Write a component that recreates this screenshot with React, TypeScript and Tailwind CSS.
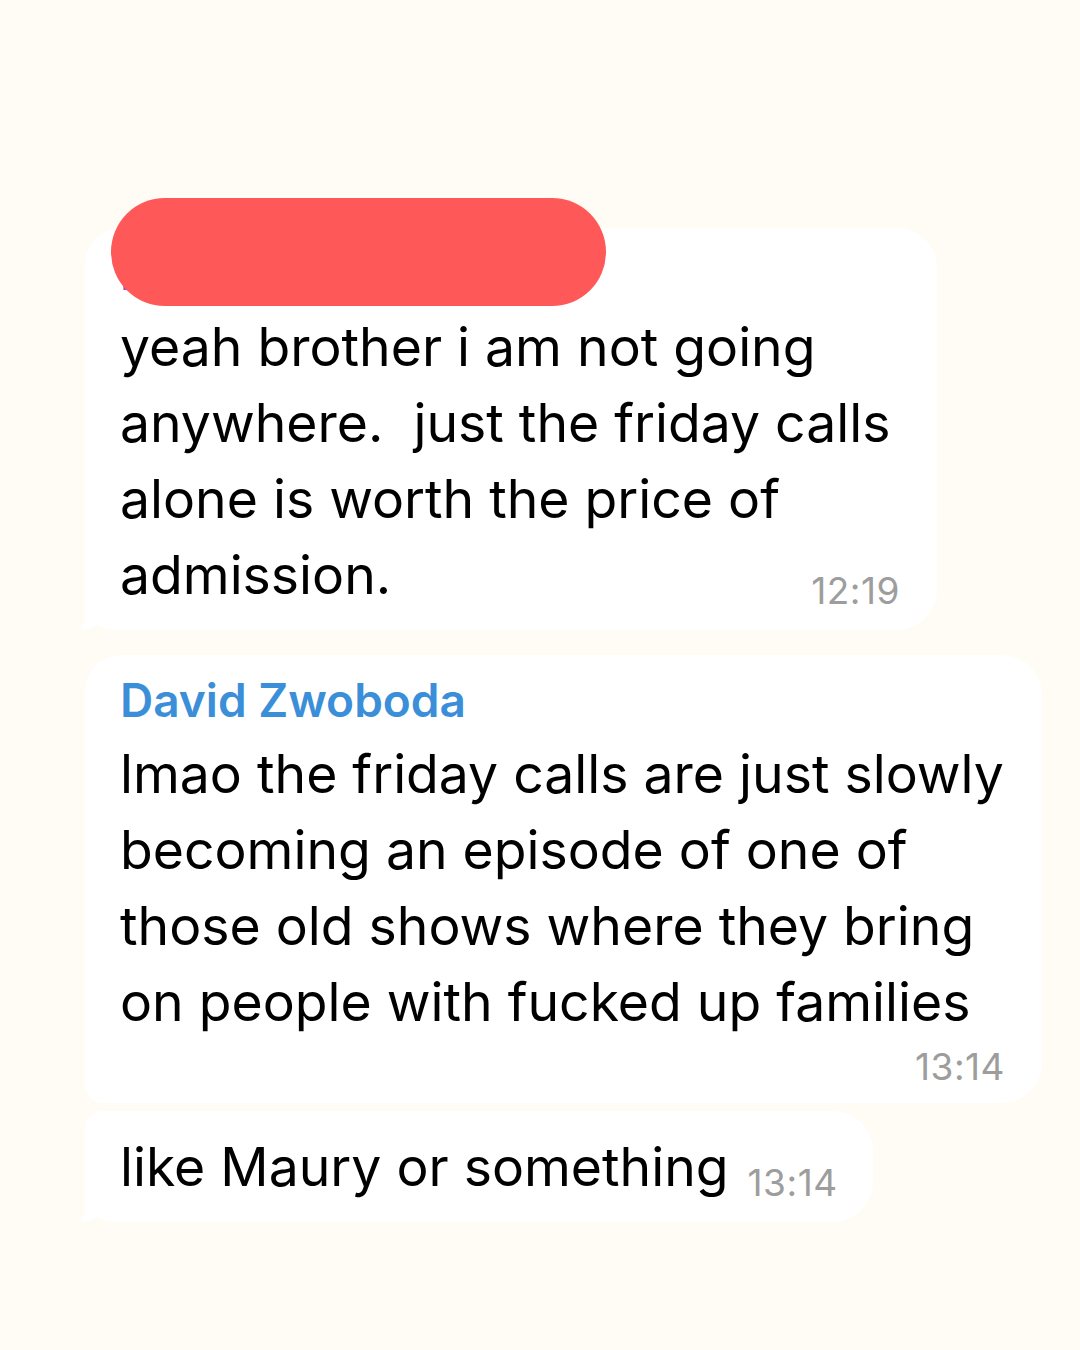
import React from 'react';

const font = { fontFamily: 'Inter, "Noto Sans", sans-serif' };

function Tail() {
  return (
    <svg className="absolute -left-[7px] bottom-0" width="44" height="40" viewBox="0 0 44 40">
      <path d="M7 0 L7 26 C7 32 5 36 0 39.5 C8 40 15 38 21 34.5 C27 38.5 33 40 44 40 L44 0 Z" fill="#ffffff" />
    </svg>
  );
}

function Time({ children }: { children: string }) {
  return <span className="text-[37px] leading-[44px] text-[#9d9d9d] tracking-[0.5px]">{children}</span>;
}

export default function App() {
  return (
    <div className="min-h-[1350px] w-[1080px] bg-[#fffcf5] pl-[85px] pt-[228px]" style={font}>
      <div className="flex flex-col">
        {/* first message */}
        <div className="relative w-[852px] rounded-[40px] rounded-tl-[36px] rounded-bl-[30px] bg-white pl-[35px] pr-[37px] pt-[10px] pb-[17px]">
          <div className="text-[46px] leading-[71px] font-semibold text-[#9b4fc9] whitespace-nowrap">Redacted Name</div>
          <div className="text-[53.5px] leading-[76px] text-black whitespace-nowrap">
            <div>yeah brother i am not going</div>
            <div>anywhere.&nbsp; just the friday calls</div>
            <div>alone is worth the price of</div>
            <div className="flex items-end justify-between">
              <span>admission.</span>
              <Time>12:19</Time>
            </div>
          </div>
          <div className="absolute left-[26px] -top-[30px] h-[108px] w-[495px] rounded-full bg-[#ff5858]" />
          <Tail />
        </div>

        {/* second message */}
        <div className="mt-[25px] w-[957px] rounded-[40px] rounded-tl-[36px] rounded-bl-[18px] bg-white pl-[35px] pr-[37px] pt-[10px] pb-[14px]">
          <div className="text-[46px] leading-[71px] font-semibold text-[#3b8ed8] whitespace-nowrap">David Zwoboda</div>
          <div className="text-[53.5px] leading-[76px] text-black whitespace-nowrap">
            <div>lmao the friday calls are just slowly</div>
            <div>becoming an episode of one of</div>
            <div>those old shows where they bring</div>
            <div>on people with fucked up families</div>
          </div>
          <div className="mt-[5px] flex justify-end">
            <Time>13:14</Time>
          </div>
        </div>

        {/* third message */}
        <div className="relative mt-[8px] w-[788px] rounded-[40px] rounded-tl-[18px] rounded-bl-[30px] bg-white pl-[35px] pr-[37px] pt-[18px] pb-[17px]">
          <div className="flex items-end gap-[19px] text-[53.5px] leading-[76px] text-black whitespace-nowrap">
            <span>like Maury or something</span>
            <Time>13:14</Time>
          </div>
          <Tail />
        </div>
      </div>
    </div>
  );
}
